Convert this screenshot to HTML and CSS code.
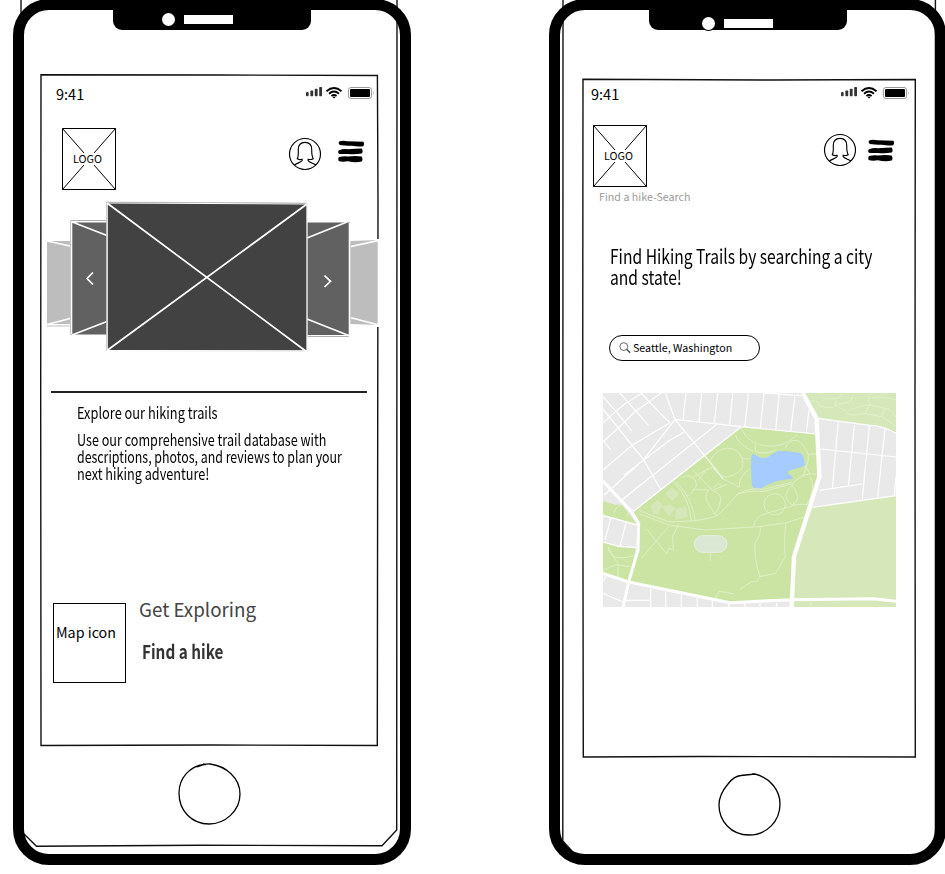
FILE: index.html
```html
<!DOCTYPE html>
<html lang="en">
<head>
<meta charset="utf-8">
<title>Hiking trails wireframe</title>
<link rel="stylesheet" href="styles.css">
</head>
<body>
<svg class="defs" width="0" height="0">
  <defs>
    <symbol id="status" viewBox="0 0 69 13">
      <g fill="#333"><rect x="0" y="5" width="2.6" height="4.200" rx="1"/><rect x="4.400" y="3.500" width="2.800" height="5.700" rx=".7"/><rect x="8.800" y="1.800" width="2.800" height="7.400" rx=".7"/><rect x="13.200" y="0" width="2.800" height="9.200" rx=".7"/></g>
      <g fill="none" stroke="#000" stroke-width="1.800"><path d="M20.500 4.200Q28 -2.200 35.500 4.200"/><path d="M23 6.700Q28 2.400 33 6.700"/><path d="M25.400 9Q28 7 30.600 9"/></g>
      <path d="M26.500 9.900Q28 8.900 29.500 9.900L28 11.400Z"/>
      <rect x="42.400" y=".5" width="23.200" height="11" rx="2.600" fill="#fff" stroke="#999"/>
      <rect x="44" y="2" width="20" height="8" rx="1"/>
      <path d="M67.300 4.200Q69 6 67.300 7.800Z" fill="#999"/>
    </symbol>
    <symbol id="avatar" viewBox="0 0 34 34">
      <g fill="none" stroke="#000" stroke-width="1.150"><circle cx="17" cy="17" r="15.500"/>
      <path d="M6.300 28.200C8.500 26.100 13.800 25.200 14.300 23.400L14 22.200C12.600 22.800 10.600 22.500 9.300 21.700C10.600 19.500 10.300 15.500 10.300 12.500C10.300 7.700 12.500 5.400 17 5.400C21.500 5.400 23.700 7.700 23.700 12.500C23.700 15.500 23.800 19.500 25.200 21.700C23.700 22.600 21.800 22.700 20.200 22.200L20.100 23.500C21 25.400 25.800 26.300 28 28"/></g>
    </symbol>
    <symbol id="menu" viewBox="0 0 27 23">
      <path d="M.8 1.700Q4 .2 9 1.200Q18 1.500 25.500 1.700Q27 4 25.300 6.200Q20 7 14 5.800Q6 5.500 1.800 4.900Q.1 3.500 .8 1.700Z"/>
      <path d="M1 10.200Q5 8.800 10 9.200Q18 8.500 23.800 8.500Q25.500 11.500 23.700 13.600Q16 14.900 10 13.900Q4 14.200 .8 13.800Q-.6 12 1 10.200Z"/>
      <path d="M1 17.100Q6 15.800 10 16.500Q18 15.700 23.500 16.500Q25.400 19 23.700 21.600Q17 22.800 10 21.300Q4 22.300 .7 21Q-.3 19 1 17.100Z"/>
    </symbol>
    <symbol id="cross" viewBox="0 0 54 62">
      <path d="M.5 .5H53.500V61.500H.5Z" fill="none" stroke="#000"/>
      <path d="M.5 .5L22 25M53.500 .5L32 25M22 37L.5 61.500M32 37L53.500 61.500" fill="none" stroke="#000"/>
    </symbol>
  </defs>
</svg>

<main class="phone phone-home">
  <svg class="outline" width="411" height="874" viewBox="0 0 411 874">
    <path d="M21 0V25M397 0L396.700 830L382 845.700L200 845.300L36.500 846.200L22 832"/>
    <path d="M41 74.700L220 75L377.400 75.500L378 200L377.300 745.500L210 745L41 745.500L40.700 400Z"/>
  </svg>
  <div class="notch"><i class="camera"></i><i class="speaker"></i></div>
  <section class="screen">
    <div class="status"><span class="time">9:41</span><svg width="69" height="13"><use href="#status"/></svg></div>
    <header class="bar">
      <div class="logo"><svg width="54" height="62"><use href="#cross"/></svg><span>LOGO</span></div>
      <svg class="avatar" width="34" height="34"><use href="#avatar"/></svg>
      <svg class="menu" width="27" height="23"><use href="#menu"/></svg>
    </header>
    <svg class="carousel" width="334" height="154" viewBox="46 200 334 154">
      <path d="M376 239H380V327H376Z" fill="#fff"/>
      <g fill="#bdbdbd"><path d="M47 241H70V326.500H47ZM350 241L379 240V325L350 324Z"/></g>
      <g fill="none" stroke="#fff" stroke-width="1.600"><path d="M47 241L70 246M47 324.500L70 318.500M47 324.800H70M351 246.500L379 240.400M351 317.700L379 325M378.500 240V326"/></g>
      <path d="M70.500 220.500H107V334.500H70.500ZM307 222.500H350V337H307Z" fill="#616161"/>
      <g fill="none" stroke="#fff" stroke-width="1.600"><path d="M71 221.500L107 235.500M71 221.800H107M72 335L107 321.500M307 238L347 222M307 319L350 336M307 335.700H350M349.500 223V337M71.500 221V334"/></g>
      <path d="M106.500 202L307 203V351L106.500 350.500Z" fill="#424242" stroke="#ccc" stroke-width=".8"/>
      <path d="M107 203L307 352M307 204L107 350.500" stroke="#fff" stroke-width="1.700"/>
      <path d="M107.300 203L307 204V350.800L107.300 350.500Z" fill="none" stroke="#fff" stroke-width="1"/>
      <path d="M93 272.500L87 278.500L93 284.500M324.500 275.500L330.500 281.300L324.500 287" fill="none" stroke="#fff" stroke-width="1.700"/>
    </svg>
    <hr>
    <div class="intro">
      <h2><span class="w1">Explore our hiking trails</span></h2>
      <p><span class="w2">Use our comprehensive trail database with</span><span class="w3">descriptions, photos, and reviews to plan your</span><span class="w4">next hiking adventure!</span></p>
    </div>
    <div class="explore">
      <div class="map-icon"><span>Map icon</span></div>
      <div class="links"><h3>Get Exploring</h3><a><span class="w5">Find a hike</span></a></div>
    </div>
  </section>
  <svg class="home" width="64" height="64" viewBox="0 0 64 64"><path d="M27 2.500C13 4 2 16 2 31C2 49 15 62 32 62C48 62 63 49 63 32C63 16 49 4 33 2Q29 1.500 20 5M26 1.800L29 2.500"/></svg>
</main>

<main class="phone phone-search">
  <svg class="outline" width="411" height="874" viewBox="536 0 411 874">
    <path d="M563 0L562.800 841L572 851M935.400 0V842"/>
    <path d="M583 79.300L770 80L915.300 79.500L915 400L915.300 757L700 756.500L583.300 757L582.700 400Z"/>
  </svg>
  <div class="notch"><i class="camera"></i><i class="speaker"></i></div>
  <section class="screen">
    <div class="status"><span class="time">9:41</span><svg width="69" height="13"><use href="#status"/></svg></div>
    <header class="bar">
      <div class="logo"><svg width="54" height="62"><use href="#cross"/></svg><span>LOGO</span></div>
      <svg class="avatar" width="34" height="34"><use href="#avatar"/></svg>
      <svg class="menu" width="27" height="23"><use href="#menu"/></svg>
    </header>
    <div class="crumb">Find a hike-Search</div>
    <h1><span class="w6">Find Hiking Trails by searching a city</span><span class="w7">and state!</span></h1>
    <div class="search">
      <svg width="12" height="12" viewBox="0 0 12 12" fill="none" stroke="#444" stroke-width=".8"><circle cx="4.800" cy="4.600" r="3.900"/><path d="M7.700 7.300L11 10.700" stroke-width="1.300"/></svg>
      <span>Seattle, Washington</span>
    </div>
    <svg class="map" width="293" height="214" viewBox="39 39 879 642" preserveAspectRatio="none">
      <rect x="39" y="39" width="879" height="642" fill="#e9e9e9"/>
      <g fill="#cbe4a4">
        <path d="M453 141L677 162L688 290L612 530L606 660L420 668L116 606L146 500V430L126 397Z"/>
        <path d="M39 363L75 374L96 374L142 435L39 406ZM39 488L100 502L138 503L116 606L39 580Z"/>
      </g>
      <g fill="#d6e8ba">
        <path d="M638 39H918V160L882 142L840 136L680 115ZM668 382L918 347V664L850 656L606 660L612 530ZM606 660H918V681H606Z"/>
        <path d="M225 340L246 323L268 342L247 363ZM182 378L203 360L218 376L204 402H190ZM216 382L237 372L257 385L237 408ZM257 386L287 379L294 411L257 419Z"/>
      </g>
      <path d="M485 225C493 214 502 237 525 234C540 232 548 212 580 212L630 218C640 223 643 240 645 254C637 265 602 266 593 275C595 285 607 287 609 296C570 300 545 304 514 325Q490 331 486 314Q481 260 485 225Z" fill="#a6cbff"/>
      <rect x="313" y="467" width="98" height="50" rx="25" fill="#dae8d3" stroke="#e8f1e0" stroke-width="3"/>
      <g class="streets">
        <path d="M39 88L69 124L126 196L161 239L213 330M39 180L62 210M39 50L78 94L104 126L126 154M90 39L176 137M153 39L213 102L240 128M226 39L255 118L378 269L399 297"/>
        <path d="M39 128L78 94L104 72L157 39M39 186L104 126L133 97L213 39M39 270L126 196L240 128M43 345L161 239L255 118M88 366L380 133M102 286L235 184L283 156"/>
        <path d="M255 118L453 140L677 162M288 39L279 119M335 39L327 124M383 39L373 130M428 39L419 134M475 39L465 138M522 39L511 145M568 39L557 149M615 45L602 153M522 39L632 47M657 90L649 158"/>
        <path d="M684 115L840 136Q880 137 918 160M745 125L727 325M793 135L775 320M838 138L817 355M885 145L863 350M918 290L913 347M690 207L918 231M688 331L817 312"/>
        <path d="M63 412L45 480M109 424L90 499M39 486L85 499L138 503M182 626V681M227 635V681M274 644V681M322 652V681M367 662V681M416 670V681M465 670V681M510 670V681M560 668V681M39 640L99 666M106 661H180M48 588L39 604"/>
      </g>
      <g class="paths">
        <path d="M453 143C475 190 510 198 540 198C590 200 610 170 622 165M622 180Q660 210 655 240L640 290M585 205Q600 176 622 182M496 195V215Q530 225 560 208M655 222H682M645 255L660 282H688M437 165Q440 190 490 215M480 236L456 236M456 236C470 270 430 290 405 291Q370 280 360 242Q380 206 412 205Q446 204 456 236"/>
        <path d="M480 266Q445 290 448 322M448 322L400 297L350 235M310 271L367 331L412 313M275 292Q300 280 315 300Q325 320 310 328Q305 345 292 347M325 300L352 265M310 290L370 260M399 320L385 310L370 322M310 328L355 330Q340 350 355 370L375 404M367 331Q390 340 393 355Q390 385 375 404M259 305Q310 360 316 425M250 305Q300 355 304 424"/>
        <path d="M148 392L235 425Q360 425 390 400L445 340Q495 330 520 335L610 310M438 345Q480 320 520 328L605 307M148 402L237 435L345 450L510 440L590 428L640 412M490 440Q495 410 530 400L615 375Q650 370 660 378M606 315Q640 360 606 375Q570 350 606 315M610 308L640 285L660 282"/>
        <circle cx="554" cy="373" r="32"/>
        <path d="M660 290Q680 320 650 375M510 440Q515 460 495 490Q490 530 510 590L557 580L586 530Q580 490 588 428M510 590L500 605H485L450 627M429 641L387 634L376 656M361 517V543M171 449L230 522L236 505L250 510L248 468L268 430M153 536L237 438M54 500Q60 550 136 526M54 500L84 552L39 570M84 552V605M84 555L122 560M72 400Q75 380 96 374M110 410Q115 390 126 397"/>
        <path d="M660 65Q680 55 690 78Q720 90 740 75L780 65L790 45M690 45Q700 60 740 55Q755 50 760 39M740 55L735 75L770 95Q810 75 840 75L825 100Q790 110 765 100M840 75Q830 50 845 39M840 75L885 85L875 110L825 100M885 85Q905 85 918 115M845 55Q880 45 918 60M875 110L918 138M662 665V681"/>
      </g>
      <g class="roads">
        <path d="M638 39L680 115L688 290L612 530L605 681" stroke-width="13"/>
        <path d="M39 303L126 397L146 430L144 510L116 606L99 681" stroke-width="9"/>
        <path d="M39 580L116 606L420 668L606 659L850 656L918 664" stroke-width="9"/>
        <path d="M39 406L142 435M126 397L453 141M668 382L918 347" stroke-width="4"/>
      </g>
    </svg>
  </section>
  <svg class="home" width="64" height="64" viewBox="0 0 64 64"><path d="M38 2L24 3.500Q17 4 11 12C5 19 2 25 2 33C2 49 14 63 32 63C50 63 63 49 63 32C63 18 53 6 38 2L35 1.800"/></svg>
</main>
</body>
</html>
```

FILE: styles.css
```css
* { box-sizing: border-box; }
body {
  margin: 0;
  width: 945px;
  height: 874px;
  overflow: hidden;
  background: #fff;
  color: #000;
  display: flex;
  align-items: flex-start;
  font-family: "Noto Sans CJK SC", "Noto Sans", sans-serif;
}
.defs { position: absolute; }
svg { display: block; flex: none; }
h1, h2, h3, p { margin: 0; font-weight: 400; }

.phone {
  position: relative;
  flex: none;
  height: 866px;
  margin-top: -1px;
  border: 11px solid #000;
  border-radius: 36px;
}
.phone-home { width: 398px; margin-left: 13px; }
.phone-search { width: 397px; margin-left: 138px; }

/* Hand-drawn frame lines run behind the device body */
.outline {
  position: absolute;
  left: -24px;
  top: -10px;
  z-index: -1;
  fill: none;
  stroke: #111;
  stroke-width: 1.4;
}

.notch {
  display: flex;
  gap: 9px;
  width: 198px;
  height: 20px;
  margin-left: 89px;
  padding: 2.5px 0 0 49px;
  background: #000;
  border-radius: 0 0 9px 9px;
}
.camera { width: 13px; height: 13px; border-radius: 50%; background: #fff; }
.speaker { width: 49px; height: 9px; margin-top: 2px; background: #fff; }
.phone-search .notch { padding: 6.5px 0 0 53px; }
.phone-search .camera { box-shadow: 0 0 0 1px #000; }

.screen { width: 337px; height: 672px; margin: 45px 0 0 17px; }
.phone-search .screen { width: 333px; height: 678px; margin: 49px 0 0 23px; }

.status { display: flex; justify-content: space-between; height: 40px; padding: 12px 3px 0 15px; }
.phone-search .status { padding: 8px 6px 0 8px; }
.time { margin-top: -1px; font-size: 14.5px; line-height: 16px; }

.bar { display: flex; height: 62px; margin-top: 13px; padding-left: 21px; }
.phone-search .bar { margin-top: 6px; padding-left: 10px; }
.logo { display: grid; width: 54px; height: 62px; }
.logo > * { grid-area: 1 / 1; }
.logo span { place-self: center; margin: 0 3px 2px 0; font-size: 10.8px; line-height: 12px; }
.avatar { margin: 9px 0 0 172px; }
.menu { margin: 12px 0 0 16px; filter: blur(.35px); }
.phone-search .avatar { margin: 8px 0 0 176px; }
.phone-search .menu { margin: 14px 0 0 11px; }

.carousel { margin: 10px 0 0 5px; }
hr { width: 316px; height: 1.5px; margin: 37px 0 0 10px; border: 0; background: #222; }

.intro { margin: 11.5px 0 0 36px; height: 80px; }
.intro span, h1 span, .links a span {
  display: block;
  width: max-content;
  transform-origin: 0 50%;
  white-space: nowrap;
}
.intro h2 { font-size: 16px; line-height: 17px; }
.intro p { margin-top: 10px; font-size: 16px; line-height: 17px; }
.w1 { transform: scaleX(.8); }
.w2 { transform: scaleX(.787); }
.w3 { transform: scaleX(.773); }
.w4 { transform: scaleX(.793); }

.explore { display: flex; margin: 119px 0 0 12px; }
.map-icon { width: 73px; height: 80px; border: 1px solid #000; padding: 19px 0 0 2px; font-size: 14.3px; line-height: 18px; white-space: nowrap; }
.links { margin-left: 13px; color: #444; }
.links h3 { margin-top: -6px; font-size: 18.8px; line-height: 24px; white-space: nowrap; }
.links a { display: block; margin: 19px 0 0 3px; color: #333; font-size: 19px; font-weight: 700; line-height: 22px; }
.w5 { transform: scaleX(.805); }

.home { margin: 15px 0 0 152.5px; fill: none; stroke: #000; stroke-width: 1.3; }
.phone-search .home { margin: 15px 0 0 156.5px; }

.crumb { margin: 2px 0 0 16px; color: #999; font-size: 10.7px; line-height: 16px; }
h1 { margin: 40px 0 0 27px; font-size: 20px; line-height: 21px; }
.w6, .w7 { transform: scaleX(.781); }

.search {
  display: flex;
  align-items: center;
  gap: 2px;
  width: 151px;
  height: 26px;
  margin: 48px 0 0 26px;
  padding-left: 9px;
  border: 1px solid #000;
  border-radius: 13px;
  font-size: 10.7px;
  white-space: nowrap;
}
.search span { margin-top: -2px; }
.map { margin: 32px 0 0 20px; }
.streets, .paths, .roads { fill: none; stroke: #fff; stroke-linejoin: round; }
.streets { stroke-width: 3.5; }
.paths { stroke-width: 2.5; stroke: #e2f0cd; }
```
